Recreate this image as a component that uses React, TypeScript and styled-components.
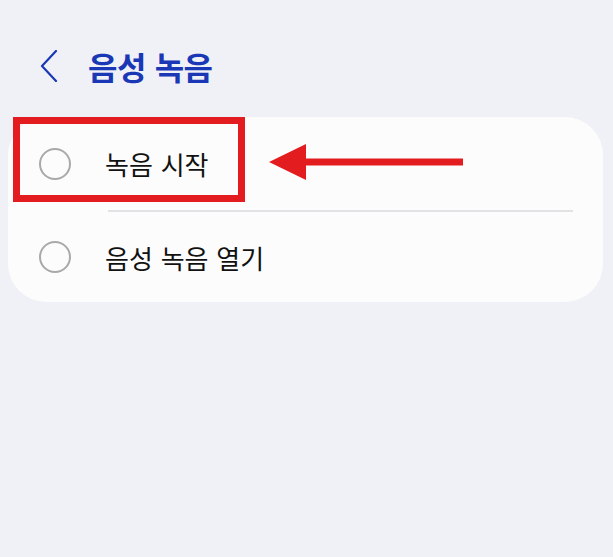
import styled, { createGlobalStyle } from "styled-components";

const GlobalStyle = createGlobalStyle`
  html, body {
    margin: 0;
    padding: 0;
    background: #f0f1f6;
  }
  body {
    font-family: "Noto Sans CJK KR", "Noto Sans", sans-serif;
  }
`;

const Page = styled.div`
  width: 613px;
  height: 557px;
  box-sizing: border-box;
  padding: 44px 10px 0 8px;
`;

const Header = styled.div`
  display: flex;
  align-items: center;
  gap: 30px;
  padding-left: 32px;
  height: 44px;
`;

const BackButton = styled.button`
  display: flex;
  align-items: center;
  padding: 0;
  border: none;
  background: none;
`;

const Title = styled.h1`
  margin: 0;
  font-size: 32px;
  font-weight: 700;
  letter-spacing: -0.5px;
  word-spacing: 2px;
  color: #1a38b6;
`;

const Card = styled.div`
  position: relative;
  margin-top: 29px;
  background: #fcfcfc;
  border-radius: 38px;
`;

const Row = styled.div`
  display: flex;
  align-items: center;
  gap: 34px;
  height: ${(p: { $h: number }) => p.$h}px;
  padding-left: 31px;
`;

const Radio = styled.span`
  width: 28px;
  height: 28px;
  border: 2px solid #a9a9a9;
  border-radius: 50%;
  flex-shrink: 0;
`;

const Label = styled.span`
  font-size: 26px;
  letter-spacing: 0;
  word-spacing: 2px;
  color: #111;
`;

const Divider = styled.div`
  height: 2px;
  background: #e3e3e5;
  margin: 0 30px 0 100px;
`;

const Highlight = styled.div`
  position: absolute;
  left: 5px;
  top: 0;
  width: 218px;
  height: 71px;
  border: 7px solid #e31c1f;
`;

const Arrow = styled.svg`
  position: absolute;
  left: 260px;
  top: 26px;
`;

const Chevron = () => (
  <svg width="18" height="32" viewBox="0 0 18 32">
    <path d="M16 1 L2 16 L16 31" fill="none" stroke="#1a38b6" strokeWidth="2.2" strokeLinecap="round" strokeLinejoin="round" />
  </svg>
);

export default function App() {
  return (
    <Page>
      <GlobalStyle />
      <Header>
        <BackButton aria-label="뒤로">
          <Chevron />
        </BackButton>
        <Title>음성 녹음</Title>
      </Header>
      <Card>
        <Row $h={93}>
          <Radio />
          <Label>녹음 시작</Label>
        </Row>
        <Divider />
        <Row $h={90}>
          <Radio />
          <Label>음성 녹음 열기</Label>
        </Row>
        <Highlight />
        <Arrow width="204" height="40" viewBox="0 0 204 40">
          <polygon points="1,19 38,1 38,37" fill="#e31c1f" />
          <rect x="36" y="15.5" width="159" height="7" fill="#e31c1f" />
        </Arrow>
      </Card>
    </Page>
  );
}
